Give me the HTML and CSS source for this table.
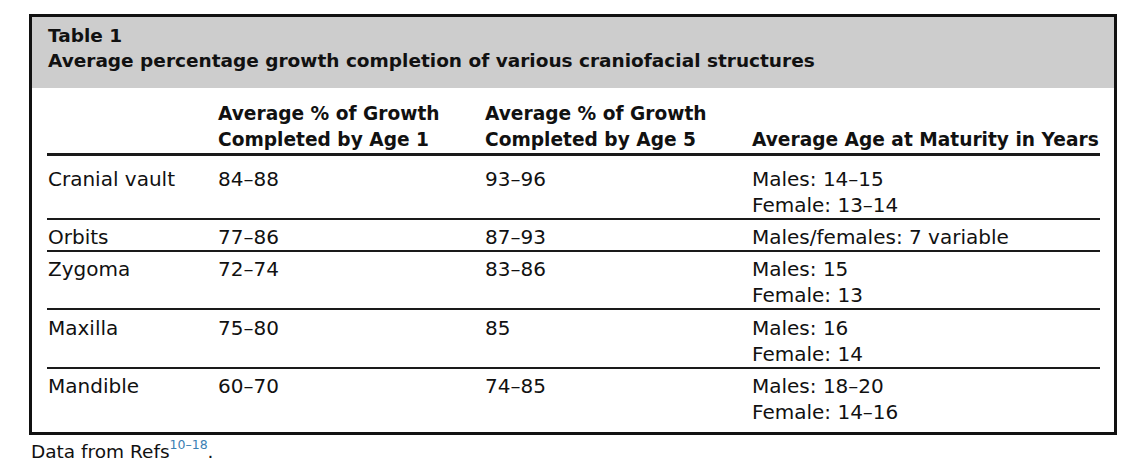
FILE: index.html
```html
<!DOCTYPE html>
<html lang="en">
<head>
<meta charset="utf-8">
<title>Table 1</title>
<link rel="stylesheet" href="styles.css">
</head>
<body>
<div class="page">
  <div class="box">
    <div class="caption">
      <div class="caption-line">Table 1</div>
      <div class="caption-line">Average percentage growth completion of various craniofacial structures</div>
    </div>
    <div class="table">
      <div class="row head">
        <div class="cell"></div>
        <div class="cell">Average % of Growth<br>Completed by Age 1</div>
        <div class="cell">Average % of Growth<br>Completed by Age 5</div>
        <div class="cell">Average Age at Maturity in Years</div>
      </div>
      <div class="row r1">
        <div class="cell">Cranial vault</div>
        <div class="cell">84–88</div>
        <div class="cell">93–96</div>
        <div class="cell">Males: 14–15<br>Female: 13–14</div>
      </div>
      <div class="row">
        <div class="cell">Orbits</div>
        <div class="cell">77–86</div>
        <div class="cell">87–93</div>
        <div class="cell">Males/females: 7 variable</div>
      </div>
      <div class="row">
        <div class="cell">Zygoma</div>
        <div class="cell">72–74</div>
        <div class="cell">83–86</div>
        <div class="cell">Males: 15<br>Female: 13</div>
      </div>
      <div class="row r4">
        <div class="cell">Maxilla</div>
        <div class="cell">75–80</div>
        <div class="cell">85</div>
        <div class="cell">Males: 16<br>Female: 14</div>
      </div>
      <div class="row last">
        <div class="cell">Mandible</div>
        <div class="cell">60–70</div>
        <div class="cell">74–85</div>
        <div class="cell">Males: 18–20<br>Female: 14–16</div>
      </div>
    </div>
  </div>
  <div class="footnote">Data from Refs<sup class="ref">10–18</sup>.</div>
</div>
</body>
</html>
```

FILE: styles.css
```css
html, body {
  margin: 0;
  padding: 0;
  background: #ffffff;
}

body {
  font-family: "DejaVu Sans", "Noto Sans", sans-serif;
  color: #111111;
}

.page {
  padding: 14px 0 0 29px;
}

.box {
  width: 1088px;
  box-sizing: border-box;
  border: 3px solid #111111;
  background: #ffffff;
}

.caption {
  background: #cdcdcd;
  padding: 6px 16px 15px 16px;
  font-weight: 700;
  font-size: 18.5px;
  line-height: 25px;
}

.table {
  padding: 13px 14px 7px 15px;
  font-size: 20px;
  line-height: 26px;
}

.row {
  display: grid;
  grid-template-columns: 170px 267px 267px 1fr;
  border-bottom: 2px solid #1a1a1a;
  padding-top: 4px;
}

.row.head {
  padding-top: 0;
  align-items: end;
  font-weight: 700;
  font-size: 18.6px;
  border-bottom-width: 3px;
}

.row.r1 {
  padding-top: 10px;
}

.row.r4 {
  padding-top: 5px;
}

.row.last {
  border-bottom: none;
}

.cell {
  padding-left: 1px;
  white-space: nowrap;
}

.footnote {
  margin-top: 6px;
  padding-left: 2px;
  font-size: 18.5px;
  line-height: 22px;
}

.ref {
  color: #3a80b3;
  font-size: 12.5px;
  vertical-align: 9px;
  line-height: 0;
}
```
